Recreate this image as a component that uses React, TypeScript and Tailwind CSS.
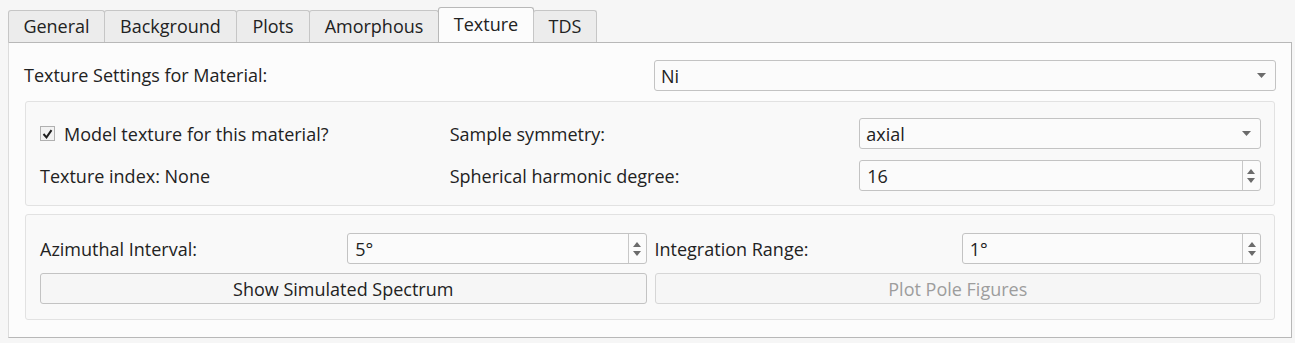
import type { ReactNode } from "react";

const TABS = [
  { label: "General", w: "w-[97px]" },
  { label: "Background", w: "w-[133px]" },
  { label: "Plots", w: "w-[74px]" },
  { label: "Amorphous", w: "w-[130px]" },
  { label: "Texture", w: "w-[96px]", active: true },
  { label: "TDS", w: "w-[64px]" },
];

function Combo({ value }: { value: string }) {
  return (
    <div className="flex h-[31px] items-center justify-between rounded-[3px] border border-[#c3c3c3] bg-[#fbfbfb] pr-[9px] pl-[6px]">
      <span>{value}</span>
      <svg width="9" height="5" viewBox="0 0 9 5">
        <path d="M0 0h9L4.5 5z" fill="#6b6b6b" />
      </svg>
    </div>
  );
}

function Spin({ value }: { value: string }) {
  return (
    <div className="flex h-[31px] items-stretch rounded-[3px] border border-[#c3c3c3] bg-[#fbfbfb]">
      <span className="flex flex-1 items-center pl-[7px]">{value}</span>
      <div className="flex w-[18px] flex-col items-center justify-center gap-[4px] border-l border-[#c8c8c8]">
        <svg width="8" height="5" viewBox="0 0 8 5">
          <path d="M4 0L8 5H0z" fill="#6b6b6b" />
        </svg>
        <svg width="8" height="5" viewBox="0 0 8 5">
          <path d="M0 0h8L4 5z" fill="#6b6b6b" />
        </svg>
      </div>
    </div>
  );
}

function Button({ children, disabled }: { children: ReactNode; disabled?: boolean }) {
  return (
    <button
      type="button"
      className={`col-span-2 h-[31px] rounded-[3px] border bg-[#f6f6f6] ${
        disabled ? "border-[#d6d6d6] text-[#9d9d9d]" : "border-[#c3c3c3] text-[#222]"
      }`}
    >
      {children}
    </button>
  );
}

function Group({ children, className }: { children: ReactNode; className: string }) {
  return (
    <div className={`mx-px rounded-[3px] border border-[#e2e2e2] bg-[#f9f9f9] pr-[13px] pl-[14px] ${className}`}>
      {children}
    </div>
  );
}

export default function App() {
  return (
    <div className="h-[343px] w-[1295px] bg-[#f6f6f6] pt-[8px] pl-[8px] font-['Open_Sans',sans-serif] text-[18px] leading-[22px] text-[#222]">
      <div className="relative z-10 flex h-[34px] items-end">
        {TABS.map((t) =>
          t.active ? (
            <div
              key={t.label}
              className={`${t.w} -ml-px flex h-[35px] items-center justify-center rounded-t-[3px] border border-b-0 border-[#b8b8b8] bg-[#fcfcfc] pb-[3px]`}
            >
              {t.label}
            </div>
          ) : (
            <div
              key={t.label}
              className={`${t.w} -ml-px flex h-[32px] items-center justify-center rounded-t-[3px] border border-b-0 border-[#c6c6c6] bg-[#ececec] pb-px first:ml-0`}
            >
              {t.label}
            </div>
          ),
        )}
      </div>
      <div className="h-[296px] w-[1284px] border border-[#b8b8b8] border-l-[#dcdcdc] bg-[#fcfcfc] px-[15px] pt-[17px]">
        <div className="grid grid-cols-2 items-center gap-x-2">
          <span className="pb-px">Texture Settings for Material:</span>
          <Combo value="Ni" />
        </div>

        <Group className="mt-[10px] pt-[16px] pb-[14px]">
          <div className="grid grid-cols-3 items-center gap-x-2 gap-y-[11px]">
            <label className="flex items-center gap-[9px]">
              <span className="flex h-[15px] w-[15px] items-center justify-center border border-[#b0b0b0] bg-[#f2f2f2]">
                <svg width="11" height="10" viewBox="0 0 11 10">
                  <path d="M1.5 5l3 3.3L9.5 1.2" fill="none" stroke="#1e1e1e" strokeWidth="2" />
                </svg>
              </span>
              Model texture for this material?
            </label>
            <span>Sample symmetry:</span>
            <Combo value="axial" />
            <span>Texture index: None</span>
            <span>Spherical harmonic degree:</span>
            <Spin value="16" />
          </div>
        </Group>

        <Group className="mt-[8px] pt-[18px] pb-[15px]">
          <div className="grid grid-cols-4 items-center gap-x-2 gap-y-[9px]">
            <span>Azimuthal Interval:</span>
            <Spin value="5°" />
            <span>Integration Range:</span>
            <Spin value="1°" />
            <Button>Show Simulated Spectrum</Button>
            <Button disabled>Plot Pole Figures</Button>
          </div>
        </Group>
      </div>
    </div>
  );
}
